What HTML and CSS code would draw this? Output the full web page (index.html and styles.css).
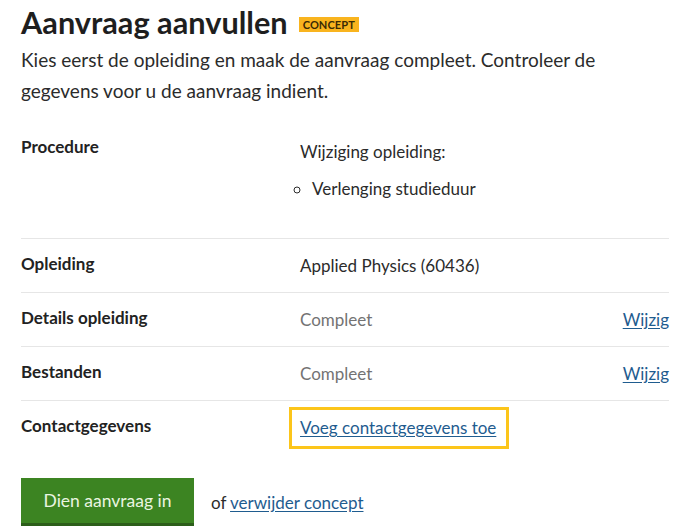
FILE: index.html
```html
<!DOCTYPE html>
<html lang="nl">
<head>
<meta charset="utf-8">
<title>Aanvraag aanvullen</title>
<link rel="stylesheet" href="styles.css">
</head>
<body>
<main class="page">
  <h1 class="title">Aanvraag aanvullen <span class="badge">Concept</span></h1>
  <p class="intro">Kies eerst de opleiding en maak de aanvraag compleet. Controleer de gegevens voor u de aanvraag indient.</p>

  <div class="summary">
    <div class="row row-first">
      <div class="label">Procedure</div>
      <div class="value">
        <p class="value-line">Wijziging opleiding:</p>
        <ul class="sublist">
          <li>Verlenging studieduur</li>
        </ul>
      </div>
      <div class="action"></div>
    </div>
    <div class="row">
      <div class="label">Opleiding</div>
      <div class="value">Applied Physics (60436)</div>
      <div class="action"></div>
    </div>
    <div class="row">
      <div class="label">Details opleiding</div>
      <div class="value muted">Compleet</div>
      <div class="action"><a class="link" href="#">Wijzig</a></div>
    </div>
    <div class="row">
      <div class="label">Bestanden</div>
      <div class="value muted">Compleet</div>
      <div class="action"><a class="link" href="#">Wijzig</a></div>
    </div>
    <div class="row">
      <div class="label">Contactgegevens</div>
      <div class="value"><a class="link focus" href="#">Voeg contactgegevens toe</a></div>
      <div class="action"></div>
    </div>
  </div>

  <div class="actions">
    <button class="btn" type="button">Dien aanvraag in</button>
    <span class="alt">of <a class="link" href="#">verwijder concept</a></span>
  </div>
</main>
</body>
</html>
```

FILE: styles.css
```css
html, body {
  margin: 0;
  padding: 0;
  background: #ffffff;
}

body {
  font-family: Lato, "Noto Sans", "Liberation Sans", sans-serif;
  color: #222222;
}

.page {
  width: 648px;
  padding: 4px 13px 0 21px;
}

.title {
  margin: 0;
  font-size: 30.7px;
  line-height: 38px;
  font-weight: 700;
  color: #1e1e1e;
  display: flex;
  align-items: center;
  gap: 11px;
}

.badge {
  display: inline-block;
  background: #f9b41e;
  color: #3a2a05;
  font-size: 11px;
  line-height: 15px;
  font-weight: 700;
  text-transform: uppercase;
  padding: 0 4px;
  letter-spacing: 0.1px;
  margin-top: 3px;
}

.intro {
  margin: 2px 0 0;
  font-size: 19px;
  line-height: 31px;
  color: #2b2b2b;
}

.summary {
  margin-top: 19px;
}

.row {
  display: grid;
  grid-template-columns: 279px 1fr auto;
  padding: 16px 0 15px;
  border-top: 1px solid #e6e6e6;
  font-size: 17px;
  line-height: 22px;
}

.row-first {
  border-top: none;
}

.label {
  font-weight: 700;
  color: #222222;
  margin-top: -2px;
}

.row-first .label {
  margin-top: -5px;
}

.value {
  color: #2b2b2b;
}

.value-line {
  margin: 0;
}

.sublist {
  margin: 15px 0 23px;
  padding-left: 12px;
  list-style: circle;
}

.muted {
  color: #737373;
}

.action {
  text-align: right;
}

.link {
  color: #1f5c8f;
  text-decoration: underline;
  text-underline-offset: 2px;
}

.focus {
  display: inline-block;
  border: 3px solid #fcc51a;
  padding: 7px 10px 7px 8px;
  margin: -10px 0 -10px -11px;
}

.actions {
  display: flex;
  align-items: center;
  gap: 17px;
  margin-top: 24px;
}

.btn {
  font-family: Lato, "Noto Sans", "Liberation Sans", sans-serif;
  font-size: 17.5px;
  line-height: 22px;
  color: #eaf5e1;
  background: #3c8422;
  border: none;
  border-bottom: 3px solid #2c5e1a;
  width: 173px;
  padding: 12px 0 11px;
  text-align: center;
  cursor: pointer;
}

.alt {
  font-size: 17px;
  color: #2b2b2b;
}
```
